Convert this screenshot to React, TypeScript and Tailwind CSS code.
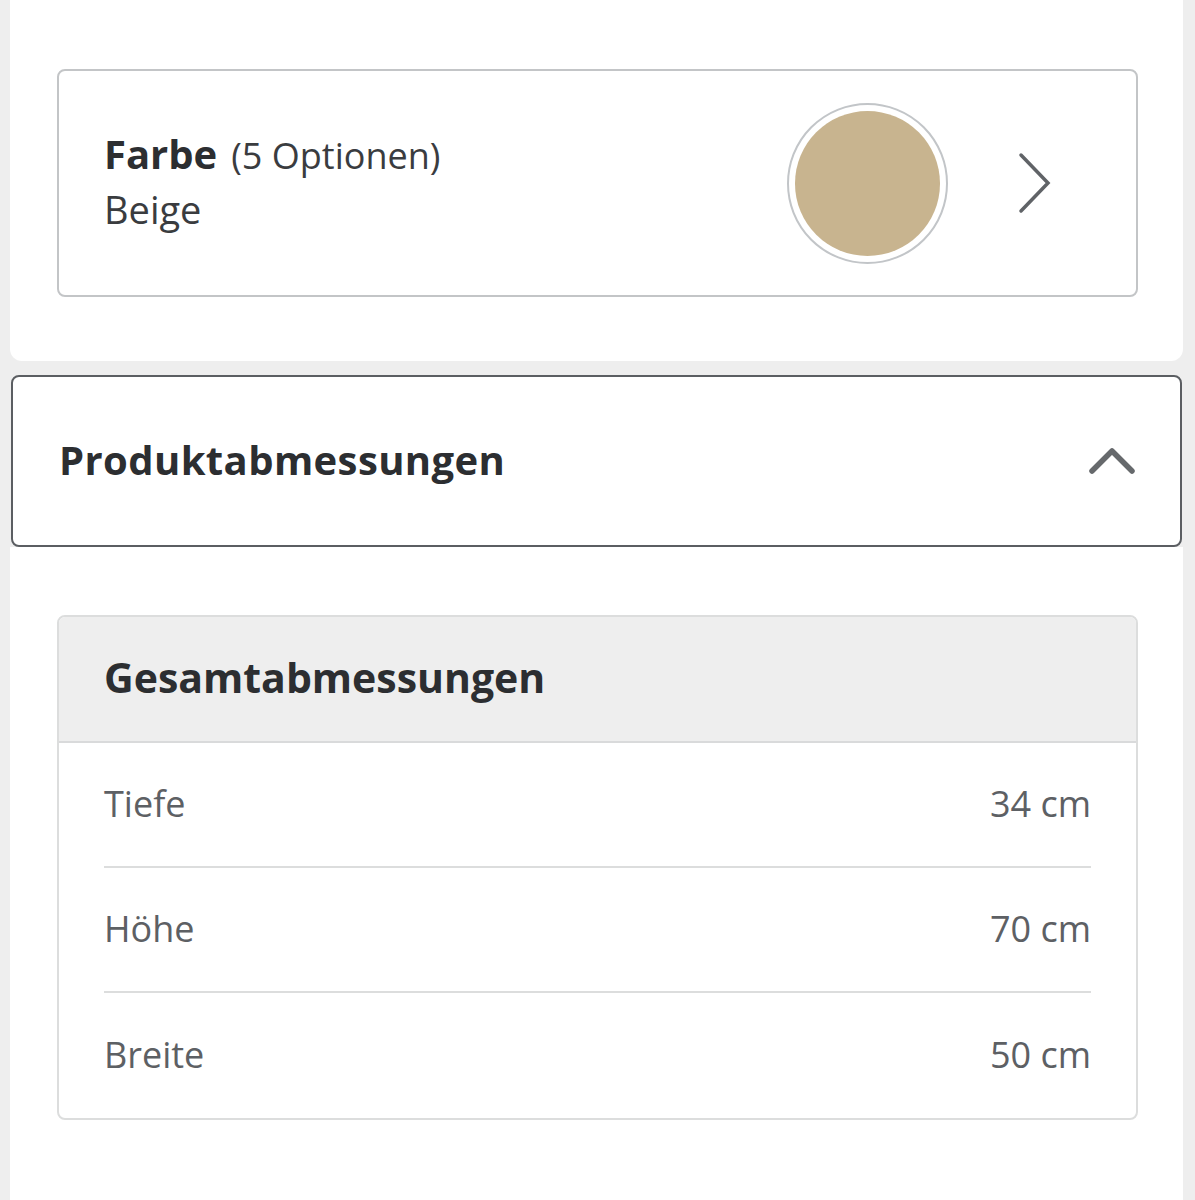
import React from "react";

const font = { fontFamily: "'Open Sans', Lato, sans-serif" };

function ChevronRight() {
  return (
    <svg width="34" height="62" viewBox="0 0 34 62" fill="none">
      <path d="M3 3 L30 31 L3 59" stroke="#606367" strokeWidth="3.5" strokeLinecap="round" strokeLinejoin="miter" />
    </svg>
  );
}

function ChevronUp() {
  return (
    <svg width="46" height="29" viewBox="0 0 46 29" fill="none">
      <path d="M3 25 L23 5 L43 25" stroke="#66696c" strokeWidth="5.5" strokeLinecap="round" strokeLinejoin="round" />
    </svg>
  );
}

const rows = [
  { label: "Tiefe", value: "34 cm" },
  { label: "Höhe", value: "70 cm" },
  { label: "Breite", value: "50 cm" },
];

export default function App() {
  return (
    <div className="min-h-[1200px] w-[1195px] bg-[#eeeeee] pl-[10px] pr-[12px] flex flex-col" style={font}>
      {/* colour picker card */}
      <section className="bg-white rounded-b-[12px] pl-[47px] pr-[45px] pt-[69px] pb-[64px]">
        <button className="w-full h-[228px] rounded-[8px] border-2 border-[#c3c5c7] bg-white flex items-center pl-[45px] pr-[84px] text-left">
          <div className="flex-1 flex flex-col gap-[5px] mb-[4px]">
            <div className="flex items-baseline gap-[14px] text-[#2c2e31]">
              <span className="text-[40px] font-bold leading-[48px]">Farbe</span>
              <span className="text-[36px] leading-[48px] text-[#3a3c3f]">(5 Optionen)</span>
            </div>
            <span className="text-[38px] leading-[48px] text-[#3a3c3f]">Beige</span>
          </div>
          <div className="w-[161px] h-[161px] rounded-full border-2 border-[#c2c5c8] p-[6px] mr-[70px]">
            <div className="w-full h-full rounded-full bg-[#c8b48f]" />
          </div>
          <ChevronRight />
        </button>
      </section>

      {/* accordion header */}
      <div className="mt-[14px] mx-[1px] h-[172px] rounded-[8px] border-2 border-[#5b5e62] bg-white flex items-center justify-between pl-[46px] pr-[45px]">
        <h2 className="text-[40px] leading-[48px] font-bold text-[#2c2e31] tracking-[0.01em] mb-[2px]">Produktabmessungen</h2>
        <div className="mb-[1px]">
          <ChevronUp />
        </div>
      </div>

      {/* dimensions table */}
      <section className="flex-1 bg-white pl-[47px] pr-[45px] pt-[68px]">
        <div className="rounded-[8px] border-2 border-[#dcdddd] overflow-hidden">
          <div className="h-[126px] bg-[#eeeeee] border-b-2 border-[#d9dadb] flex items-center px-[45px]">
            <h3 className="text-[41px] leading-[48px] font-bold text-[#2c2e31] mb-[4px]">Gesamtabmessungen</h3>
          </div>
          <div className="px-[45px]">
            {rows.map((r, i) => (
              <div
                key={r.label}
                className={`h-[125px] flex items-center justify-between pb-[2px] text-[36px] leading-[48px] text-[#5d6064] ${i < rows.length - 1 ? "border-b-2 border-[#dcdddd]" : ""}`}
              >
                <span>{r.label}</span>
                <span>{r.value}</span>
              </div>
            ))}
          </div>
        </div>
      </section>
    </div>
  );
}
